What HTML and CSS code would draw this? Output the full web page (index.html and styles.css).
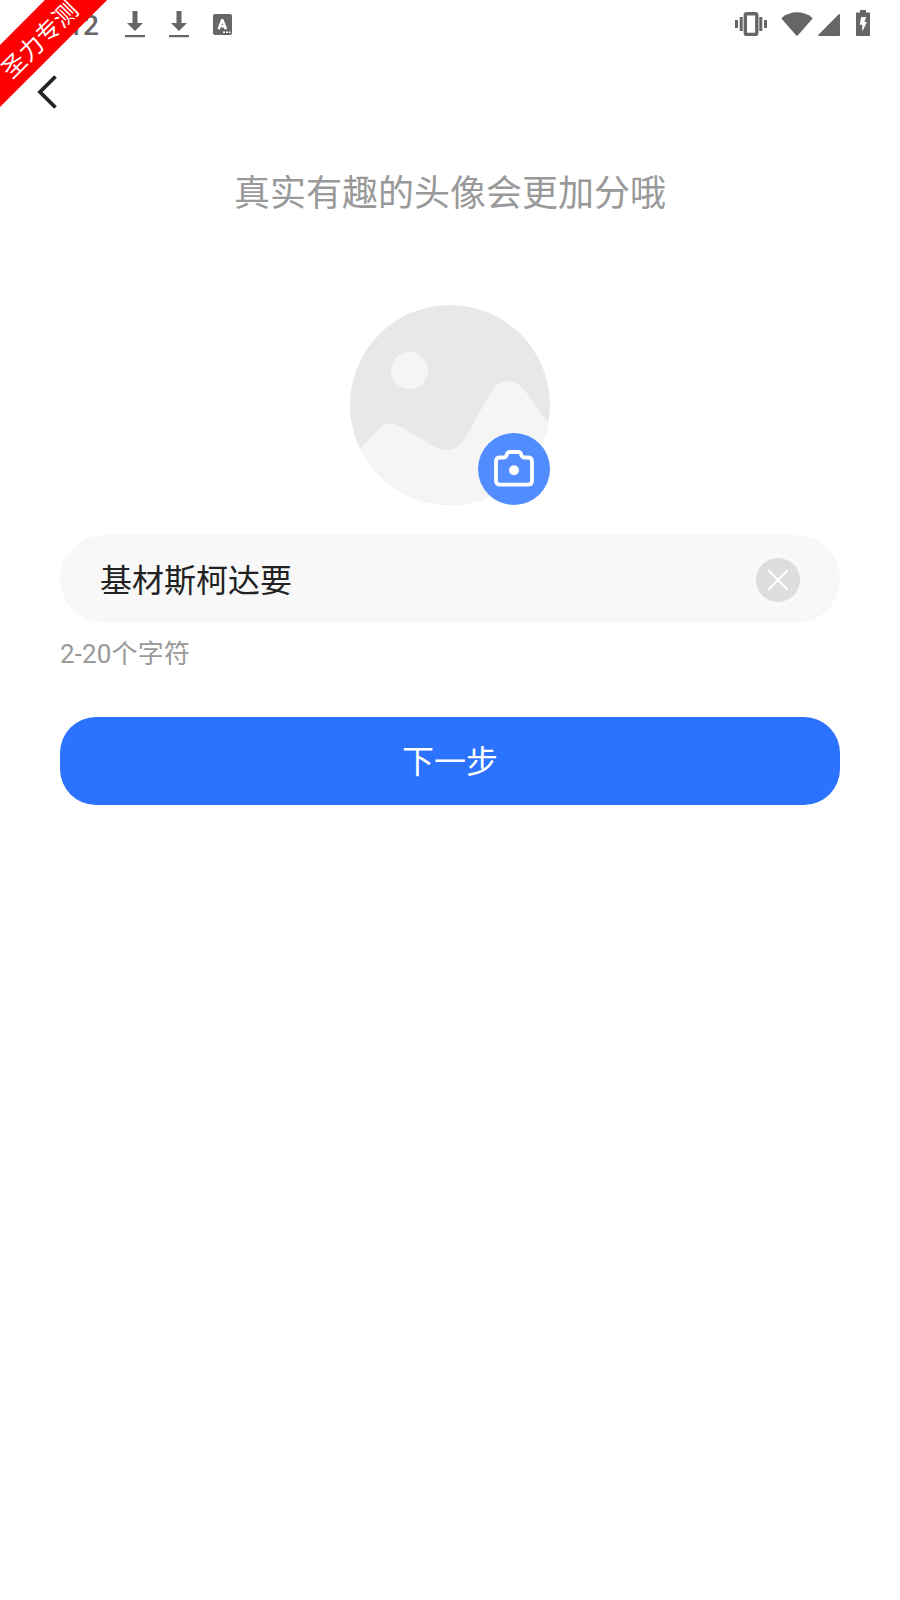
FILE: index.html
```html
<!DOCTYPE html>
<html lang="zh-CN">
<head>
    <meta charset="UTF-8">
    <title>设置头像</title>
    <link rel="stylesheet" href="styles.css">
</head>
<body>
    <div class="ribbon"><span>圣力专测</span></div>

    <header class="status-bar">
        <div class="status-left">
            <span class="time">12</span>
            <svg class="download" width="20" height="27" viewBox="0 0 20 27">
                <path d="M7.500 0h5v12H18l-8 8-8-8h5.500zM0 24h20v2.300H0z"/>
            </svg>
            <svg class="download" width="20" height="27" viewBox="0 0 20 27">
                <path d="M7.500 0h5v12H18l-8 8-8-8h5.500zM0 24h20v2.300H0z"/>
            </svg>
            <svg class="keyboard" width="19" height="21" viewBox="0 0 19 21">
                <rect width="19" height="21" rx="2"/>
                <path class="letter" d="M5.600 15.200 9.300 5.500 13 15.200M6.800 12.400h5"/>
                <path class="dots" d="M10 18.200h2m1 0h2m1 0h1.500"/>
            </svg>
        </div>
        <div class="status-right">
            <svg width="33" height="24" viewBox="0 0 33 24">
                <path d="M0 8h3v8H0zM4.700 5h3v14h-3zM24.300 5h3v14h-3zM29 8h3v8h-3z"/>
                <rect class="phone" x="10.300" y="1.700" width="11.500" height="20.800" rx="1.500"/>
            </svg>
            <svg class="wifi" width="32" height="24" viewBox="0 0 32 24">
                <path d="M.8 5.800C9-1.600 23-1.600 31.200 5.800q.5.500 0 1.100L17 23.300q-1 1-2 0L.8 6.900q-.5-.6 0-1.100z"/>
            </svg>
            <svg class="signal" width="22" height="22" viewBox="0 0 22 22">
                <path d="M22 1v20q0 1-1 1H1q-1.500 0-.6-1.200L20.500.5Q22-.6 22 1z"/>
            </svg>
            <svg class="battery" width="14" height="26" viewBox="0 0 14 26">
                <path d="M4 0h6v2.500h3q1 0 1 1V25q0 1-1 1H1q-1 0-1-1V3.500q0-1 1-1h3z"/>
                <path class="bolt" d="M5.200 7h5L8.500 12H11L6.300 21.500V14.800H3.800z"/>
            </svg>
        </div>
    </header>

    <nav class="nav">
        <svg width="20" height="34" viewBox="0 0 20 34">
            <path d="M18.500 1.500 3 17l15.500 15.500"/>
        </svg>
    </nav>

    <main class="content">
        <h1>真实有趣的头像会更加分哦</h1>

        <div class="avatar">
            <svg width="200" height="200" viewBox="0 0 200 200">
                <defs>
                    <clipPath id="circle"><circle cx="100" cy="100" r="100"/></clipPath>
                </defs>
                <g clip-path="url(#circle)">
                    <path class="sky" d="M0 0h200v200H0z"/>
                    <circle class="hill" cx="59.500" cy="65.500" r="18.500"/>
                    <path class="hill" d="M0 152 13 141 28 125Q36 115 49 121L78 138Q89 145 97 145Q106 146 113 135Q119 128 124 117L140 89C149 72 165 72 176 87L193 112 200 118V200H0z"/>
                </g>
            </svg>
            <div class="camera">
                <svg width="40" height="37" viewBox="0 0 40 37">
                    <path d="M6 7.500h3.500q2 0 2.800-1.800l.5-1.200q.8-2.500 3-2.500h8.400q2.200 0 3 2.500l.5 1.200Q28.500 7.500 30.500 7.500H34q4 0 4 4v19.200q0 4-4 4H6q-4 0-4-4V11.500q0-4 4-4z"/>
                    <circle cx="20" cy="20.300" r="5"/>
                </svg>
            </div>
        </div>

        <div class="field">
            <span>基材斯柯达要</span>
            <svg width="44" height="44" viewBox="0 0 44 44">
                <circle cx="22" cy="22" r="22"/>
                <path d="m13 13 18 18M31 13 13 31"/>
            </svg>
        </div>
        <p class="hint">2-20个字符</p>

        <button class="next" type="button">下一步</button>
    </main>
</body>
</html>
```

FILE: styles.css
```css
body {
    margin: 0;
    min-height: 1600px;
    background-color: #ffffff;
    font-family: Roboto, "Noto Sans CJK SC", sans-serif;
}
svg {
    display: block;
    flex-shrink: 0;
}

/* Cinta de la esquina */
.ribbon {
    position: absolute;
    top: 15.5px;
    left: -62px;
    width: 200px;
    height: 44px;
    background-color: #ff0000;
    color: #ffffff;
    font-size: 24px;
    line-height: 51px;
    text-align: center;
    transform: rotate(-45deg);
}

/* Barra de estado */
.status-bar {
    display: flex;
    justify-content: space-between;
    height: 48px;
    padding: 0 30px 0 67px;
    fill: #666666;
    color: #666666;
}
.status-left,
.status-right {
    display: flex;
    align-items: center;
}
.time {
    width: 32px;
    margin-right: 26px;
    padding-top: 3px;
    font-size: 28px;
    font-weight: 500;
    line-height: 50px;
    text-align: right;
}
.download {
    margin-right: 24px;
}
.keyboard .letter {
    fill: none;
    stroke: #ffffff;
    stroke-width: 2.4;
    stroke-linejoin: bevel;
}
.keyboard .dots {
    stroke: #ffffff;
    stroke-width: 1.6;
}
.phone {
    fill: none;
    stroke: #666666;
    stroke-width: 3.4;
}
.wifi {
    margin-left: 13px;
}
.signal {
    margin: 1px 16px 0 5px;
}
.battery {
    margin-top: -2px;
}
.bolt {
    fill: #ffffff;
}

.nav {
    height: 88px;
    padding-left: 37px;
    display: flex;
    align-items: center;
}
.nav path {
    fill: none;
    stroke: #222428;
    stroke-width: 3.8;
}

.content {
    padding: 32px 60px 0;
}
h1 {
    margin: 0;
    color: #999999;
    font-size: 36px;
    font-weight: 400;
    line-height: 52px;
    text-align: center;
}

/* Avatar */
.avatar {
    position: relative;
    width: 200px;
    margin: 85px auto 30px;
}
.sky {
    fill: #e8e8e8;
}
.hill {
    fill: #f5f5f5;
}
.camera {
    position: absolute;
    right: 0;
    bottom: 0;
    display: flex;
    align-items: center;
    justify-content: center;
    width: 72px;
    height: 72px;
    border-radius: 50%;
    background-color: #518dff;
}
.camera svg {
    margin-bottom: 1px;
}
.camera path {
    fill: none;
    stroke: #ffffff;
    stroke-width: 3.8;
}
.camera circle {
    fill: #ffffff;
}

.field {
    display: flex;
    align-items: center;
    justify-content: space-between;
    height: 88px;
    padding: 0 40px;
    border-radius: 44px;
    background-color: #f8f8f8;
    color: #222222;
    font-size: 32px;
}
.field span {
    padding-bottom: 2px;
}
.field svg {
    margin-top: 2px;
}
.field circle {
    fill: #dddddd;
}
.field path {
    stroke: #ffffff;
    stroke-width: 2.2;
    stroke-linecap: round;
}
.hint {
    margin: 12px 0 44px;
    color: #999999;
    font-size: 26px;
    letter-spacing: 0.15px;
    line-height: 38px;
}
.next {
    display: block;
    width: 100%;
    height: 88px;
    padding: 0 0 4px;
    border: none;
    border-radius: 36px;
    background-color: #2b73ff;
    color: #ffffff;
    font-family: inherit;
    font-size: 32px;
}
```
